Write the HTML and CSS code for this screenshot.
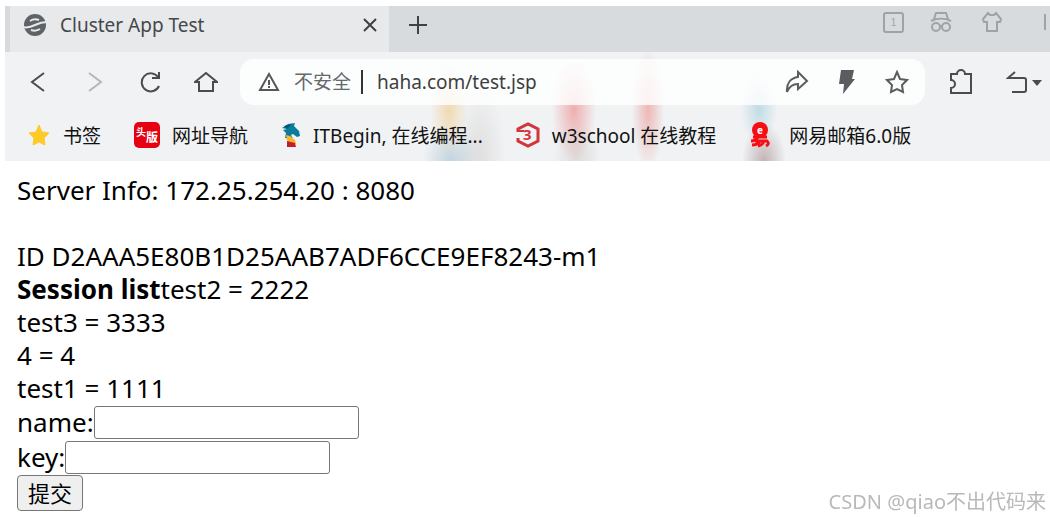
FILE: index.html
```
<!DOCTYPE html>
<html lang="zh-CN">
<head>
    <meta charset="UTF-8">
    <meta name="viewport" content="width=device-width, initial-scale=1.0">
    <title>Cluster App Test</title>
    <link rel="stylesheet" href="styles.css">
</head>
<body>
    <header class="browser">
        <div class="tab-strip">
            <div class="tab">
                <svg class="tab-icon" width="24" height="24" viewBox="0 0 24 24">
                    <circle cx="12" cy="12" r="11" fill="#5f6368"/>
                    <path d="M7 8c3-2 6-2 9-1M0 14c4 1 8 0 12-2s8-3 12-3M8 17c3 1 6 1 9-1" fill="none" stroke="#e7e9eb" stroke-width="2"/>
                </svg>
                <span class="tab-title">Cluster App Test</span>
                <button class="icon-button tab-close" type="button" aria-label="Close tab">
                    <svg width="14" height="14" viewBox="0 0 14 14"><path d="M1 1l12 12M13 1L1 13" stroke="#3f4245" stroke-width="2"/></svg>
                </button>
            </div>
            <button class="icon-button new-tab" type="button" aria-label="New tab">
                <svg width="20" height="20" viewBox="0 0 20 20"><path d="M10 1v18M1 10h18" stroke="#3f4245" stroke-width="2"/></svg>
            </button>
            <div class="window-tools">
                <button class="icon-button count" type="button">1</button>
                <button class="icon-button" type="button" aria-label="Private window">
                    <svg width="22" height="22" viewBox="0 0 22 22" fill="none" stroke="#9fa3a6" stroke-width="2">
                        <path d="M1 10c6-3 14-3 20 0M4 8l2-6h10l2 6"/>
                        <circle cx="6" cy="16" r="4"/><circle cx="16" cy="16" r="4"/><path d="M10 15h2"/>
                    </svg>
                </button>
                <button class="icon-button" type="button" aria-label="Theme">
                    <svg width="20" height="22" viewBox="0 0 20 22" fill="none" stroke="#9fa3a6" stroke-width="2">
                        <path d="M6 2L1 8l1 3h3v9h10v-9h3l1-3-5-6-2 2H8z"/>
                    </svg>
                </button>
                <span class="divider"></span>
            </div>
        </div>

        <div class="toolbar">
            <div class="nav-buttons">
                <button class="icon-button" type="button" aria-label="Back">
                    <svg width="22" height="22" viewBox="0 0 22 22"><path d="M17 2L5 11l12 9" fill="none" stroke="#4a4c4e" stroke-width="2"/></svg>
                </button>
                <button class="icon-button" type="button" aria-label="Forward">
                    <svg width="22" height="22" viewBox="0 0 22 22"><path d="M6 2l12 9-12 9" fill="none" stroke="#b4b7b9" stroke-width="2"/></svg>
                </button>
                <button class="icon-button" type="button" aria-label="Reload">
                    <svg width="22" height="22" viewBox="0 0 22 22" fill="none" stroke="#4a4c4e" stroke-width="2">
                        <path d="M20 15a9 9 0 1 1-1-9"/><path d="M13 7h7V1"/>
                    </svg>
                </button>
                <button class="icon-button" type="button" aria-label="Home">
                    <svg width="24" height="22" viewBox="0 0 24 22"><path d="M5 11H1L12 2l11 9h-4v9H5z" fill="none" stroke="#4a4c4e" stroke-width="2"/></svg>
                </button>
            </div>
            <div class="address-bar">
                <svg width="22" height="20" viewBox="0 0 22 20" fill="none" stroke="#55585a" stroke-width="2">
                    <path d="M11 2l9 16H2z"/><path d="M11 8v5M11 14v2"/>
                </svg>
                <label class="security" for="url">不安全</label>
                <input class="url" id="url" type="text" value="haha.com/test.jsp">
                <div class="address-tools">
                    <button class="icon-button" type="button" aria-label="Share">
                        <svg width="24" height="24" viewBox="0 0 24 24"><path d="M13 2l9 9-9 8v-5C7 14 4 17 2 22 1 13 6 8 13 7z" fill="none" stroke="#5a5d5f" stroke-width="2"/></svg>
                    </button>
                    <button class="icon-button" type="button" aria-label="Speed mode">
                        <svg width="18" height="24" viewBox="0 0 18 24"><path d="M3 0h13l-2 9h3L5 24l1-10H1z" fill="#5a5d5f"/></svg>
                    </button>
                    <button class="icon-button" type="button" aria-label="Add bookmark">
                        <svg width="24" height="24" viewBox="0 0 24 24"><path d="M12 2l3 7 7 1-5 5 1 7-6-3-6 3 1-7-5-5 7-1z" fill="none" stroke="#5a5d5f" stroke-width="2"/></svg>
                    </button>
                </div>
            </div>
            <button class="icon-button extensions" type="button" aria-label="Extensions">
                <svg width="24" height="26" viewBox="0 0 24 26"><path d="M2 5h6a4 4 0 0 1 8 0h6v19H2v-5a4 4 0 0 0 0-8z" fill="none" stroke="#4a4c4e" stroke-width="2"/></svg>
            </button>
            <button class="icon-button restore" type="button" aria-label="Reopen closed tab">
                <svg width="36" height="24" viewBox="0 0 36 24">
                    <path d="M9 2L2 8h16q2 0 2 2v10q0 2-2 2H6" fill="none" stroke="#4a4c4e" stroke-width="2"/>
                    <path d="M26 10h10l-5 6z" fill="#4a4c4e"/>
                </svg>
            </button>
        </div>

        <nav class="bookmarks">
            <a class="bookmark" href="#">
                <svg width="24" height="24" viewBox="0 0 24 24"><path d="M12 2l3 7 7 1-5 5 1 7-6-3-6 3 1-7-5-5 7-1z" fill="#ffc927" stroke="#ffc927" stroke-width="1" stroke-linejoin="round"/></svg>
                书签
            </a>
            <a class="bookmark" href="#">
                <svg width="26" height="26" viewBox="0 0 26 26">
                    <rect width="26" height="26" rx="5" fill="#e60012"/>
                    <text class="icon-text" x="2" y="14" font-size="10">头</text>
                    <text class="icon-text" x="12" y="20" font-size="12">版</text>
                </svg>
                网址导航
            </a>
            <a class="bookmark" href="#">
                <svg width="20" height="26" viewBox="0 0 20 26">
                    <path d="M1 6l6-4 7-1-1 3 5 5 1 5-3 1-4-3-2 1 2 4-8-1 1-5-3-3 4-1z" fill="#087e9c"/>
                    <path d="M3 4l8-2-5 5z" fill="#075570"/>
                    <path d="M5 13l4 1 5 4 1 4H8l-2-4z" fill="#f5b52e"/>
                    <path d="M6 19l8 2 1 4H6z" fill="#c51f25"/>
                </svg>
                ITBegin, 在线编程...
            </a>
            <a class="bookmark" href="#">
                <svg width="24" height="26" viewBox="0 0 24 26">
                    <path d="M2 10V7l10-5 10 5v12l-10 5-10-5v-3" fill="none" stroke="#d0363b" stroke-width="3"/>
                    <path d="M1 9h7" stroke="#d0363b" stroke-width="2"/>
                    <text class="icon-text red" x="7" y="18" font-size="15">3</text>
                </svg>
                w3school 在线教程
            </a>
            <a class="bookmark" href="#">
                <svg width="28" height="26" viewBox="0 0 28 26">
                    <circle cx="11" cy="8" r="8" fill="#f50f14"/>
                    <text class="icon-text" x="8" y="12" font-size="10">e</text>
                    <path d="M4 15h14M9 15q-2 4-7 4M6 19h12q3 3-1 5M11 19q-2 4-8 4M15 19q-1 4-6 5" fill="none" stroke="#f50f14" stroke-width="3"/>
                </svg>
                网易邮箱6.0版
            </a>
        </nav>
    </header>

    <main class="page">
        Server Info: 172.25.254.20 : 8080<br>
        <br>
        ID D2AAA5E80B1D25AAB7ADF6CCE9EF8243-m1<br>
        <b>Session list</b>test2 = 2222<br>
        test3 = 3333<br>
        4 = 4<br>
        test1 = 1111<br>
        <form>
            <div class="field"><label for="name">name:</label><input type="text" id="name" name="dataName"></div>
            <div class="field"><label for="key">key:</label><input type="text" id="key" name="dataValue"></div>
            <button class="submit" type="submit">提交</button>
        </form>
    </main>
    <div class="watermark">CSDN @qiao不出代码来</div>
</body>
</html>
```
FILE: styles.css
```
body {
    font-family: "Noto Sans", "Noto Sans CJK SC", sans-serif;
    background-color: #fff;
    margin: 0;
}
svg {
    display: block;
    flex: none;
}
.icon-button {
    display: flex;
    align-items: center;
    justify-content: center;
    flex: none;
    width: 28px;
    height: 28px;
    padding: 0;
    border: none;
    background: none;
}

/* browser window */
.browser {
    margin: 6px 0 0 5px;
    background:
        radial-gradient(ellipse 18px 44px at 444px 104px, #f1c77c90, transparent),
        radial-gradient(ellipse 28px 38px at 446px 155px, #9dbccd90, transparent),
        radial-gradient(ellipse 26px 70px at 475px 150px, #c7bfba60, transparent),
        radial-gradient(ellipse 22px 50px at 569px 104px, #ec7b7b90, transparent),
        radial-gradient(ellipse 24px 36px at 572px 150px, #c0b5af60, transparent),
        radial-gradient(ellipse 16px 60px at 643px 104px, #ec8b8690, transparent),
        radial-gradient(ellipse 18px 34px at 754px 104px, #9bcbd990, transparent),
        radial-gradient(ellipse 22px 38px at 759px 155px, #a98f8fa0, transparent),
        #f0f2f4;
}
.tab-strip {
    display: flex;
    align-items: center;
    height: 46px;
    background-color: #d7dbde;
}
.tab {
    display: flex;
    align-items: center;
    box-sizing: border-box;
    width: 379px;
    height: 46px;
    margin-left: 5px;
    padding: 0 5px 8px 13px;
    background-color: #e7e9eb;
}
.tab-title {
    flex: 1;
    margin-left: 13px;
    font-size: 19px;
    color: #45484b;
}
.new-tab {
    margin: 0 0 8px 15px;
}
.window-tools {
    display: flex;
    align-items: center;
    gap: 23px;
    margin: 0 4px 14px auto;
}
.count {
    box-sizing: border-box;
    width: 21px;
    height: 21px;
    border: 2px solid #9fa3a6;
    border-radius: 3px;
    font-size: 10px;
    color: #9fa3a6;
}
.divider {
    width: 2px;
    height: 16px;
    margin-left: 15px;
    background-color: #9fa3a6;
}
.toolbar {
    display: flex;
    align-items: center;
    height: 60px;
    padding: 0 8px 0 19px;
}
.nav-buttons {
    display: flex;
    gap: 28px;
}
.address-bar {
    display: flex;
    align-items: center;
    box-sizing: border-box;
    flex: 1;
    height: 46px;
    min-width: 0;
    margin-left: 20px;
    padding: 0 14px 0 18px;
    background-color: rgba(255, 255, 255, 0.8);
    border-radius: 14px;
}
.security {
    margin-left: 14px;
    padding-right: 10px;
    border-right: 2px solid #333;
    font-size: 19px;
    line-height: 24px;
    color: #66696b;
}
.url {
    flex: 1;
    min-width: 0;
    padding: 0 0 0 14px;
    border: none;
    outline: none;
    background: none;
    font-family: inherit;
    font-size: 19px;
    color: #3c3f42;
}
.address-tools {
    display: flex;
    gap: 22px;
}
.extensions {
    margin-left: 22px;
}
.restore {
    width: 36px;
    margin-left: 31px;
}
.bookmarks {
    display: flex;
    align-items: center;
    gap: 33px;
    height: 45px;
    padding: 0 0 4px 22px;
}
.bookmark {
    display: flex;
    align-items: center;
    gap: 12px;
    height: 45px;
    font-size: 19px;
    white-space: nowrap;
    text-decoration: none;
    color: #111;
}
.icon-text {
    fill: #fff;
    font-weight: bold;
}
.icon-text.red {
    fill: #d0363b;
}

/* jsp page */
.page {
    padding: 13px 17px 0;
    font-size: 26px;
    line-height: 33px;
    color: #000;
}
.field {
    display: flex;
    align-items: center;
    height: 35px;
}
.field input {
    box-sizing: border-box;
    width: 265px;
    height: 33px;
    border: 1px solid #767676;
    border-radius: 3px;
    font-size: 22px;
}
.submit {
    display: block;
    height: 36px;
    padding: 0 10px;
    border: 1px solid #767676;
    border-radius: 4px;
    background-color: #efefef;
    font-family: inherit;
    font-size: 22px;
    line-height: 32px;
    color: #000;
}
.watermark {
    position: fixed;
    right: 4px;
    bottom: 2px;
    font-size: 20px;
    color: #b9b9b9;
}
```
